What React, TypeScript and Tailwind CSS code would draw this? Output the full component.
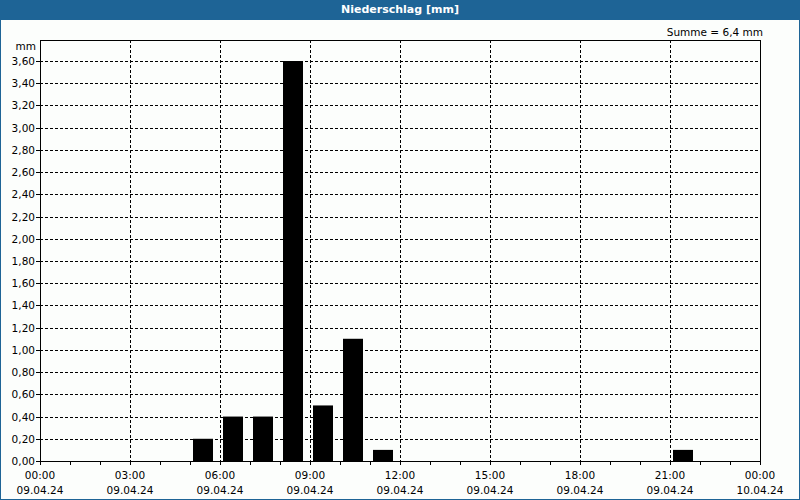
const bars: [number, number][] = [
  [5, 0.2], [6, 0.4], [7, 0.4], [8, 3.6], [9, 0.5], [10, 1.1], [11, 0.1], [21, 0.1],
];

const X0 = 40, X1 = 760, Y0 = 461, YT = 40;
const px = (h: number) => X0 + h * 30;
const py = (v: number) => Y0 - v * (400 / 3.6);

export default function App() {
  const ys = Array.from({ length: 18 }, (_, i) => (i + 1) * 0.2);
  return (
    <div className="w-[800px] h-[500px] bg-[#1e6496] p-px" style={{ fontFamily: 'Tahoma, "DejaVu Sans", sans-serif' }}>
      <div className="h-[19px] flex items-center justify-center text-white text-[11px] font-bold">Niederschlag [mm]</div>
      <div className="bg-[#fcfefc] h-[479px]">
        <svg width="798" height="479" viewBox="1 20 798 479" className="block" fontSize="11" fontFamily='"DejaVu Sans", sans-serif'>
          <text x="763" y="36" textAnchor="end" fill="#000" fontSize="10.5">Summe = 6,4 mm</text>
          <text x="36" y="50" textAnchor="end" fontSize="10.5">mm</text>
          {ys.map((v) => (
            <line key={v} x1={X0} x2={X1} y1={Math.round(py(v)) + 0.5} y2={Math.round(py(v)) + 0.5} stroke="#000" strokeDasharray="3 2" />
          ))}
          {[3, 6, 9, 12, 15, 18, 21].map((h) => (
            <line key={h} x1={px(h) + 0.5} x2={px(h) + 0.5} y1={YT} y2={Y0} stroke="#000" strokeDasharray="3 2" />
          ))}
          {bars.map(([h, v]) => (
            <rect key={h} x={px(h) + 3} width={20} y={py(v)} height={Y0 - py(v)} fill="#000" />
          ))}
          <rect x={X0 + 0.5} y={YT + 0.5} width={X1 - X0} height={Y0 - YT} fill="none" stroke="#000" />
          {[0, ...ys].map((v) => (
            <g key={v}>
              <line x1={X0 - 4} x2={X0} y1={Math.round(py(v)) + 0.5} y2={Math.round(py(v)) + 0.5} stroke="#000" />
              <text x={X0 - 5} y={py(v) + 4} textAnchor="end" fontSize="10.5">{v.toFixed(2).replace('.', ',')}</text>
            </g>
          ))}
          {Array.from({ length: 25 }, (_, h) => (
            <line key={h} x1={px(h) + 0.5} x2={px(h) + 0.5} y1={Y0} y2={Y0 + 4} stroke="#000" />
          ))}
          {[0, 3, 6, 9, 12, 15, 18, 21, 24].map((h) => (
            <g key={h}>
              <text x={px(h)} y={479} textAnchor="middle" fontSize="10.5">{h === 24 ? '00:00' : `${String(h).padStart(2, '0')}:00`}</text>
              <text x={px(h)} y={494} textAnchor="middle" fontSize="10.5">{h === 24 ? '10.04.24' : '09.04.24'}</text>
            </g>
          ))}
        </svg>
      </div>
    </div>
  );
}
